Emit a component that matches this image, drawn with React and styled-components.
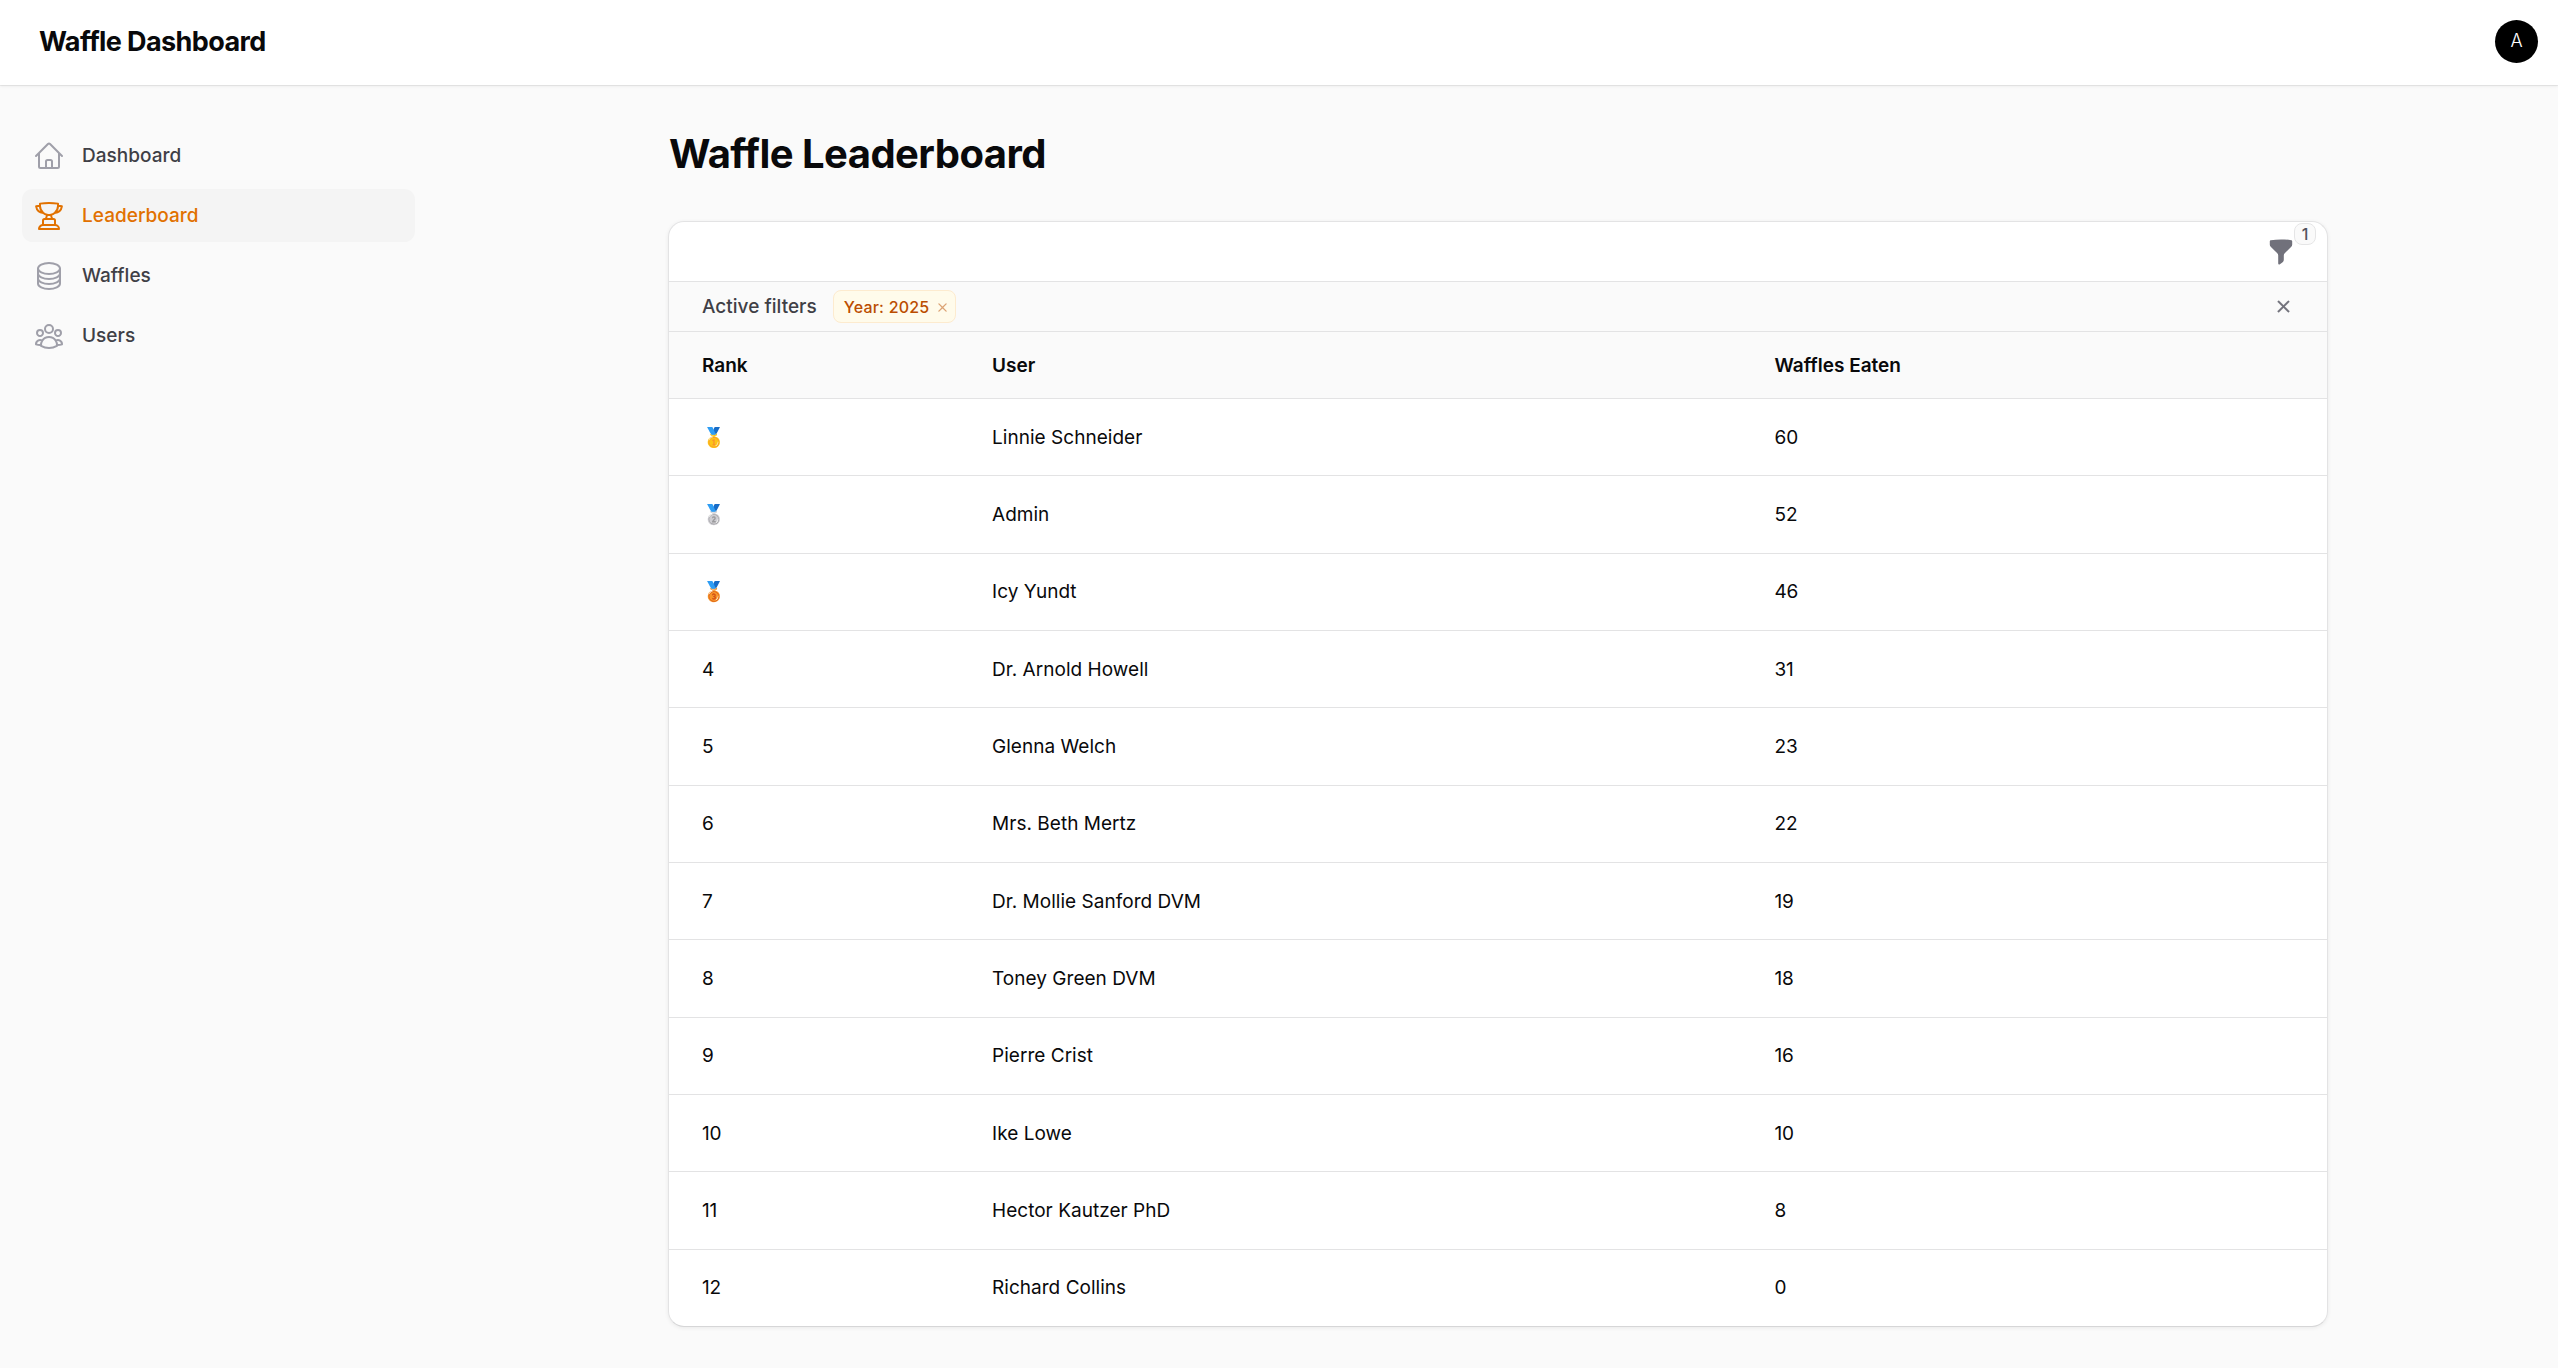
import React from "react";
import styled, { createGlobalStyle, css } from "styled-components";
import {
  HiOutlineHome,
  HiOutlineTrophy,
  HiOutlineCircleStack,
  HiOutlineUserGroup,
  HiMiniFunnel,
  HiMiniXMark,
} from "react-icons/hi2";

const GlobalStyle = createGlobalStyle`
  *, *::before, *::after { box-sizing: border-box; }
  html, body, #root { height: 100%; }
  body {
    margin: 0;
    background: #fafafa;
    color: #09090b;
    font-family: Inter, "Noto Sans", "Noto Color Emoji", sans-serif;
    font-size: 19px;
    line-height: 26.667px;
    overflow: hidden;
  }
  button { font: inherit; color: inherit; border: 0; background: none; padding: 0; cursor: pointer; }
`;

const Page = styled.div`
  min-height: 100%;
  display: flex;
  flex-direction: column;
`;

const Topbar = styled.header`
  height: 85px;
  padding: 0 20px 2px 39px;
  display: flex;
  align-items: center;
  justify-content: space-between;
  background: #fff;
  box-shadow: 0 0 0 1px rgba(9, 9, 11, 0.06), 0 1px 3px rgba(0, 0, 0, 0.08);
`;

const Brand = styled.div`
  padding-top: 2px;
  font-size: 27px;
  line-height: 26.667px;
  font-weight: 700;
  letter-spacing: -0.6px;
`;

const Avatar = styled.button`
  width: 43px;
  height: 43px;
  border-radius: 50%;
  background: #000;
  color: #fff;
  font-size: 18px;
  font-weight: 300;
`;

const Body = styled.div`
  flex: 1;
  display: flex;
`;

const Sidebar = styled.nav`
  width: 427px;
  flex: none;
  padding: 44px 12px 0 22px;
  display: flex;
  flex-direction: column;
  gap: 6.667px;
`;

const NavItem = styled.a`
  height: 53.333px;
  padding: 0 11px;
  display: flex;
  align-items: center;
  gap: 17px;
  border-radius: 10.667px;
  font-weight: 500;
  letter-spacing: 0.02px;
  color: #3f3f46;
  svg { width: 32px; height: 32px; color: #9f9fa9; }
  ${(p) =>
    p.$active &&
    css`
      background: #f4f4f4;
      color: #e17100;
      svg { color: #e17100; }
    `}
`;

const NavLabel = styled.span`
  padding-top: 1px;
`;

const Main = styled.main`
  width: 1660px;
  margin-left: 241px;
  padding-top: 45px;
`;

const Title = styled.h1`
  margin: 0 0 43px;
  padding-left: 1px;
  font-size: 40px;
  line-height: 48px;
  font-weight: 700;
  letter-spacing: -0.54px;
`;

const Card = styled.section`
  border: 1px solid #e3e3e4;
  border-bottom-color: #d6d6d7;
  border-radius: 16px;
  background: #fff;
  overflow: hidden;
  box-shadow: 0 1px 4px rgba(0, 0, 0, 0.07);
`;

const Toolbar = styled.div`
  height: 59px;
  padding-right: 32px;
  display: flex;
  align-items: center;
  justify-content: flex-end;
`;

const FilterButton = styled.button`
  position: relative;
  width: 28px;
  height: 28px;
  color: #71717b;
  svg { display: block; width: 28px; height: 28px; }
`;

const CountBadge = styled.span`
  position: absolute;
  left: 27px;
  top: -15px;
  width: 22px;
  height: 22px;
  display: flex;
  align-items: center;
  justify-content: center;
  border: 1px solid #e5e5e6;
  border-radius: 8px;
  background: #fafafa;
  color: #52525c;
  font-size: 16px;
  line-height: 20px;
  font-weight: 500;
`;

const FilterBar = styled.div`
  height: 50px;
  padding: 0 32px 0 33px;
  display: flex;
  align-items: center;
  border-top: 1px solid #e3e3e4;
  background: #fafafa;
`;

const FilterLabel = styled.span`
  padding-top: 1px;
  font-weight: 500;
  letter-spacing: 0.02px;
  color: #3f3f46;
  margin-right: 16px;
`;

const FilterChip = styled.span`
  height: 33px;
  padding: 1px 4px 0 10px;
  display: flex;
  align-items: center;
  gap: 5px;
  border: 1px solid #fdebcf;
  border-radius: 8px;
  background: #fffbeb;
  color: #bb4d00;
  font-size: 16px;
  font-weight: 500;
  letter-spacing: 0.2px;
  svg { display: block; width: 17px; height: 17px; opacity: 0.5; }
`;

const ClearFilters = styled.button`
  margin-left: auto;
  color: #71717b;
  svg { display: block; width: 23px; height: 23px; stroke: currentColor; stroke-width: 0.3px; }
`;

const Table = styled.div`
  display: flex;
  flex-direction: column;
`;

const Row = styled.div`
  height: 77.333px;
  padding: 2px 33px 0;
  display: grid;
  grid-template-columns: 290px 782.5px 1fr;
  align-items: center;
  border-top: 1px solid #e3e3e4;
`;

const HeadRow = styled(Row)`
  height: 67px;
  background: #fafafa;
  font-weight: 600;
`;

const Cell = styled.span`
  ${(p) => p.$name && "letter-spacing: 0.03px;"}
  ${(p) => p.$numeric && "letter-spacing: -0.15px;"}
`;

const navigation = [
  { label: "Dashboard", Icon: HiOutlineHome },
  { label: "Leaderboard", Icon: HiOutlineTrophy, active: true },
  { label: "Waffles", Icon: HiOutlineCircleStack },
  { label: "Users", Icon: HiOutlineUserGroup },
];

const leaders = [
  ["🥇", "Linnie Schneider", 60],
  ["🥈", "Admin", 52],
  ["🥉", "Icy Yundt", 46],
  ["4", "Dr. Arnold Howell", 31],
  ["5", "Glenna Welch", 23],
  ["6", "Mrs. Beth Mertz", 22],
  ["7", "Dr. Mollie Sanford DVM", 19],
  ["8", "Toney Green DVM", 18],
  ["9", "Pierre Crist", 16],
  ["10", "Ike Lowe", 10],
  ["11", "Hector Kautzer PhD", 8],
  ["12", "Richard Collins", 0],
];

export default function App() {
  return (
    <Page>
      <GlobalStyle />
      <Topbar>
        <Brand>Waffle Dashboard</Brand>
        <Avatar>A</Avatar>
      </Topbar>
      <Body>
        <Sidebar>
          {navigation.map(({ label, Icon, active }) => (
            <NavItem key={label} $active={active}>
              <Icon />
              <NavLabel>{label}</NavLabel>
            </NavItem>
          ))}
        </Sidebar>
        <Main>
          <Title>Waffle Leaderboard</Title>
          <Card>
            <Toolbar>
              <FilterButton>
                <HiMiniFunnel />
                <CountBadge>1</CountBadge>
              </FilterButton>
            </Toolbar>
            <FilterBar>
              <FilterLabel>Active filters</FilterLabel>
              <FilterChip>
                Year: 2025
                <HiMiniXMark />
              </FilterChip>
              <ClearFilters>
                <HiMiniXMark />
              </ClearFilters>
            </FilterBar>
            <Table>
              <HeadRow>
                <Cell>Rank</Cell>
                <Cell>User</Cell>
                <Cell>Waffles Eaten</Cell>
              </HeadRow>
              {leaders.map(([rank, user, eaten]) => (
                <Row key={user}>
                  <Cell $numeric>{rank}</Cell>
                  <Cell $name>{user}</Cell>
                  <Cell $numeric>{eaten}</Cell>
                </Row>
              ))}
            </Table>
          </Card>
        </Main>
      </Body>
    </Page>
  );
}
